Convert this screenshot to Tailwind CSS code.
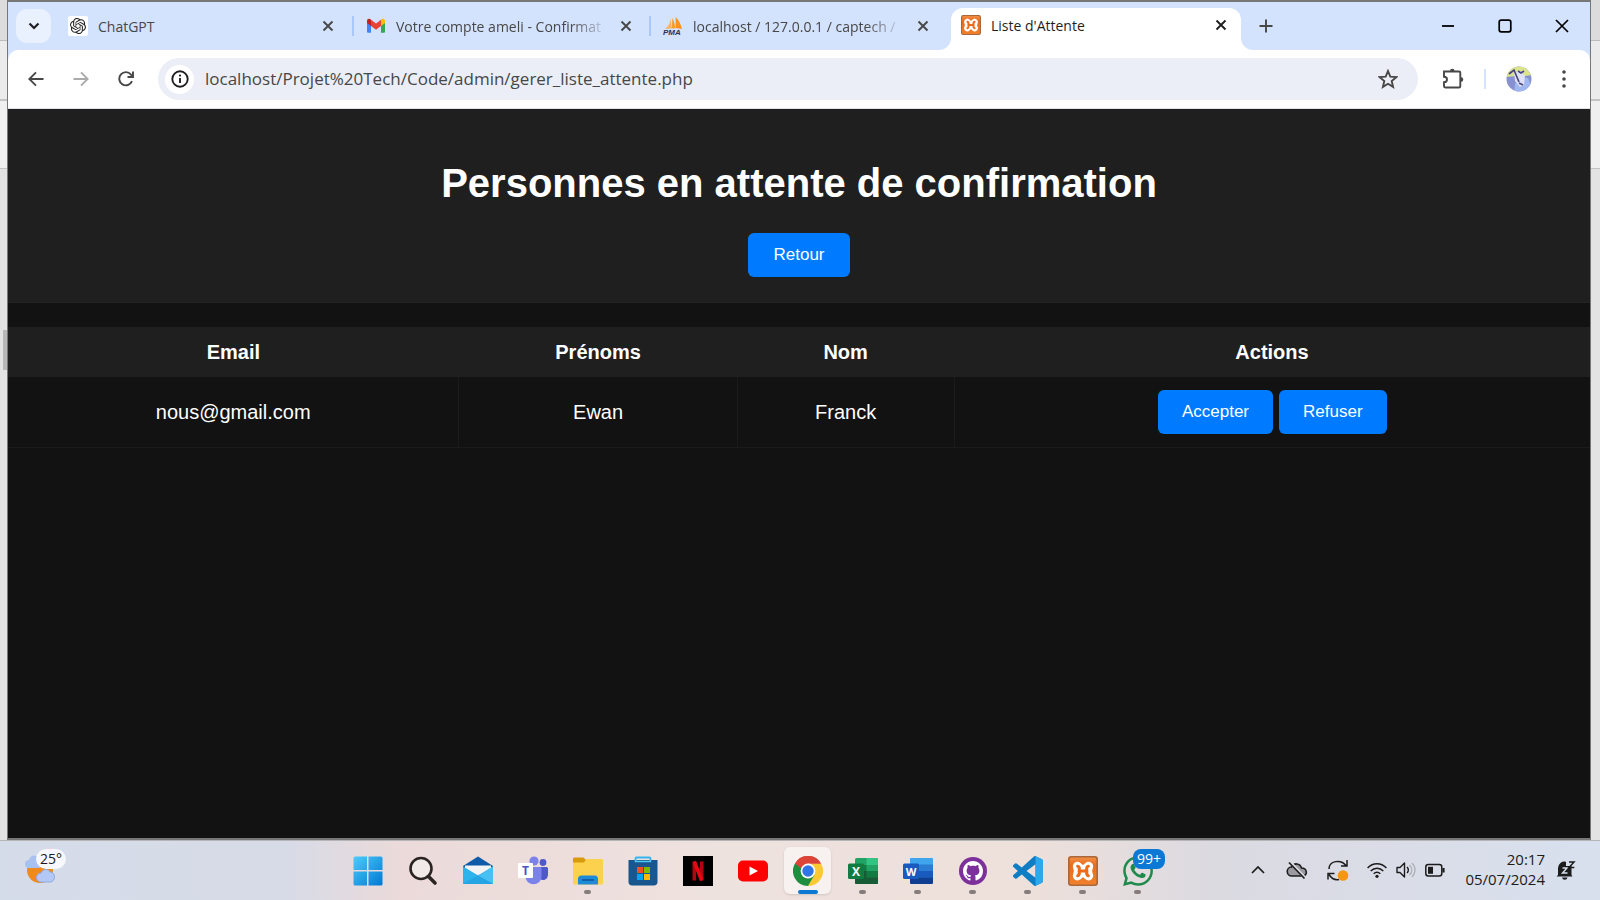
<!DOCTYPE html>
<html lang="fr">
<head>
<meta charset="utf-8">
<title>Liste d'Attente</title>
<script src="https://cdn.jsdelivr.net/npm/@tailwindcss/browser@4"></script>
</head>
<body class="flex min-h-screen flex-col bg-[#e3e3e3] font-['Open_Sans','Noto_Sans',sans-serif] text-[#474747]">

<!-- shared icon shapes -->
<svg class="absolute h-0 w-0" aria-hidden="true">
  <defs>
    <linearGradient id="orange" x2="0" y2="1"><stop stop-color="#f09048"/><stop offset=".3" stop-color="#ea6c1c"/><stop offset="1" stop-color="#f0812c"/></linearGradient>
    <linearGradient id="sky" x2="1" y2="1"><stop stop-color="#4fcbfb"/><stop offset="1" stop-color="#0078d4"/></linearGradient>
  </defs>
  <symbol id="xampp" viewBox="0 0 30 30">
    <rect x=".8" y=".8" width="28.4" height="28.4" rx="2.5" fill="url(#orange)" stroke="#a9673a" stroke-width="1.6"/>
    <path d="M9.500 10.500L20.500 19.700M20.500 10.500L9.500 19.700M9.500 10.500c1.500 3 1.500 6 0 9.200M20.500 10.500c-1.500 3-1.500 6 0 9.200" fill="none" stroke="#fff" stroke-width="9.400" stroke-linecap="round" stroke-linejoin="round"/>
    <path d="M9.600 10.200c2.400.8 1.600 4.800 1.600 4.800s.8 4-1.600 4.800M20.400 10.200c-2.400.8-1.600 4.800-1.600 4.800s-.8 4 1.600 4.800M11 15h8" fill="none" stroke="#ea6c1c" stroke-width="3" stroke-linecap="round"/>
  </symbol>
  <symbol id="close" viewBox="0 0 12 12"><path d="M1.500 1.500l9 9M10.500 1.500l-9 9" stroke="currentColor" stroke-width="1.900"/></symbol>
  <symbol id="pma" viewBox="0 0 20 20">
    <path d="M8 1.500C7.600 6 6 10 2 13l6-.6z" fill="#f8b463"/><path d="M9 2c.6 4-.2 8-.8 10.600l4-.4C12 8.500 11 5 9 2z" fill="#f89c2c"/><path d="M12.600 1c.2 4 .2 8-.1 11l6.500 1C18 8.500 16 4 12.600 1z" fill="#f7941d"/>
    <text x="0" y="19" font-family="Liberation Sans, sans-serif" font-weight="700" font-style="italic" font-size="8" fill="#2d3156">PMA</text>
  </symbol>
</svg>

<div class="flex flex-1">
  <!-- window behind, left edge -->
  <div class="flex w-[7px] flex-col" aria-hidden="true">
    <div class="h-[41px] border-b border-[#bdbdbd] bg-[#dcdcdc]"></div>
    <div class="h-[60px] border-b-2 border-[#c4c4c4] bg-[#ebebeb]"></div>
    <div class="h-[68px] border-b border-[#c4c4c4] bg-[#f0f0f0]"></div>
    <div class="h-[161px]"></div>
    <div class="ml-[3px] h-10 bg-[#b8b8b8]"></div>
  </div>

  <!-- browser window -->
  <div class="flex min-w-0 flex-1 flex-col border border-y-2 border-[#777] bg-[#111]">
    <div class="flex h-12 items-center bg-[#d3e2fd] pl-2">
      <button aria-label="Rechercher dans les onglets" class="mr-[3px] grid h-[34px] w-[35px] place-items-center rounded-[11px] bg-[#e9f0fe] text-[#1f1f1f]">
        <svg class="h-3 w-3" viewBox="0 0 12 12"><path d="M1.500 3.500L6 8l4.500-4.500" fill="none" stroke="currentColor" stroke-width="2.200"/></svg>
      </button>
      <div role="tablist" class="flex h-full">
        <div class="flex w-[298px] items-center pr-[18px] pl-[14px]">
          <button role="tab" class="flex min-w-0 flex-1 items-center gap-[10px] text-left text-[14px]">
            <svg class="h-5 w-5 rounded-xs bg-white p-[2px]" viewBox="0 0 24 24"><path fill="#222" d="M22.2819 9.8211a5.9847 5.9847 0 0 0-.5157-4.9108 6.0462 6.0462 0 0 0-6.5098-2.9A6.0651 6.0651 0 0 0 4.9807 4.1818a5.9847 5.9847 0 0 0-3.9977 2.9 6.0462 6.0462 0 0 0 .7427 7.0966 5.98 5.98 0 0 0 .511 4.9107 6.051 6.051 0 0 0 6.5146 2.9001A5.9847 5.9847 0 0 0 13.2599 24a6.0557 6.0557 0 0 0 5.7718-4.2058 5.9894 5.9894 0 0 0 3.9977-2.9001 6.0557 6.0557 0 0 0-.7475-7.0729zm-9.022 12.6081a4.4755 4.4755 0 0 1-2.8764-1.0408l.1419-.0804 4.7783-2.7582a.7948.7948 0 0 0 .3927-.6813v-6.7369l2.02 1.1686a.071.071 0 0 1 .038.052v5.5826a4.504 4.504 0 0 1-4.4945 4.4944zm-9.6607-4.1254a4.4708 4.4708 0 0 1-.5346-3.0137l.142.0852 4.783 2.7582a.7712.7712 0 0 0 .7806 0l5.8428-3.3685v2.3324a.0804.0804 0 0 1-.0332.0615L9.74 19.9502a4.4992 4.4992 0 0 1-6.1408-1.6464zM2.3408 7.8956a4.485 4.485 0 0 1 2.3655-1.9728V11.6a.7664.7664 0 0 0 .3879.6765l5.8144 3.3543-2.0201 1.1685a.0757.0757 0 0 1-.071 0l-4.8303-2.7865A4.504 4.504 0 0 1 2.3408 7.872zm16.5963 3.8558L13.1038 8.364 15.1192 7.2a.0757.0757 0 0 1 .071 0l4.8303 2.7913a4.4944 4.4944 0 0 1-.6765 8.1042v-5.6772a.79.79 0 0 0-.407-.667zm2.0107-3.0231l-.142-.0852-4.7735-2.7818a.7759.7759 0 0 0-.7854 0L9.409 9.2297V6.8974a.0662.0662 0 0 1 .0284-.0615l4.8303-2.7866a4.4992 4.4992 0 0 1 6.6802 4.66zM8.3065 12.863l-2.02-1.1638a.0804.0804 0 0 1-.038-.0567V6.0742a4.4992 4.4992 0 0 1 7.3757-3.4537l-.142.0805L8.704 5.459a.7948.7948 0 0 0-.3927.6813zm1.0976-2.3654l2.602-1.4998 2.6069 1.4998v2.9994l-2.5974 1.4997-2.6067-1.4997Z"/></svg>
            <span>ChatGPT</span>
          </button>
          <button aria-label="Fermer ChatGPT"><svg class="h-3 w-3"><use href="#close"/></svg></button>
        </div>
        <div class="flex w-[297px] items-center pr-[17px]">
          <span class="mr-3 h-5 w-[2px] bg-[#a9c7fa]"></span>
          <button role="tab" class="flex min-w-0 flex-1 items-center gap-[10px] text-left text-[14px]">
            <svg class="h-5 w-5 shrink-0" viewBox="0 0 20 20"><path d="M1 5v10.500c0 .8.500 1.300 1.300 1.300H5V8z" fill="#4285f4"/><path d="M19 5v10.500c0 .8-.5 1.300-1.300 1.300H15V8z" fill="#34a853"/><path d="M1 7V5c0-2 2-2.700 3.400-1.700L5 3.700V10L1.700 7.600C1.300 7.400 1 7.300 1 7z" fill="#c5221f"/><path d="M15 3.700l.6-.4C17 2.300 19 3 19 5v2L15 10z" fill="#fbbc04"/><path d="M5 3.700l5 3.800 5-3.800V10l-5 3.700L5 10z" fill="#ea4335"/></svg>
            <span class="whitespace-nowrap [mask-image:linear-gradient(to_right,black_85%,rgb(0_0_0/0.2))]">Votre compte ameli - Confirmat</span>
          </button>
          <button aria-label="Fermer Votre compte ameli"><svg class="h-3 w-3"><use href="#close"/></svg></button>
        </div>
        <div class="flex w-[298px] items-center pr-[18px]">
          <span class="mr-3 h-5 w-[2px] bg-[#a9c7fa]"></span>
          <button role="tab" class="flex min-w-0 flex-1 items-center gap-[10px] text-left text-[14px]">
            <svg class="h-5 w-5 shrink-0"><use href="#pma"/></svg>
            <span class="whitespace-nowrap [mask-image:linear-gradient(to_right,black_85%,rgb(0_0_0/0.2))]">localhost / 127.0.0.1 / captech /</span>
          </button>
          <button aria-label="Fermer phpMyAdmin"><svg class="h-3 w-3"><use href="#close"/></svg></button>
        </div>
        <div class="relative mx-1 flex h-[42px] w-[290px] items-center self-end rounded-t-[12px] bg-white pr-[14px] pl-[10px] text-[#1f1f1f]">
          <svg class="absolute bottom-0 -left-3 h-3 w-3 text-white" viewBox="0 0 12 12"><path d="M12 0v12H0A12 12 0 0 0 12 0z" fill="currentColor"/></svg>
          <svg class="absolute -right-3 bottom-0 h-3 w-3 text-white" viewBox="0 0 12 12"><path d="M0 0v12h12A12 12 0 0 1 0 0z" fill="currentColor"/></svg>
          <button role="tab" aria-selected="true" class="flex flex-1 items-center gap-[10px] pb-[8px] text-left text-[14px]">
            <svg class="h-5 w-5"><use href="#xampp"/></svg>
            <span>Liste d'Attente</span>
          </button>
          <button aria-label="Fermer Liste d'Attente" class="pb-[8px]"><svg class="h-3 w-3"><use href="#close"/></svg></button>
        </div>
      </div>
      <button aria-label="Nouvel onglet" class="ml-[14px]"><svg class="h-[14px] w-[14px]" viewBox="0 0 14 14"><path d="M7 .5v13M.5 7h13" stroke="currentColor" stroke-width="1.900"/></svg></button>
      <div class="ml-auto flex self-stretch text-black">
        <button aria-label="Réduire" class="grid w-[57px] place-items-center"><svg class="h-3 w-3" viewBox="0 0 12 12"><path d="M0 6h12" stroke="currentColor" stroke-width="1.800"/></svg></button>
        <button aria-label="Agrandir" class="grid w-[57px] place-items-center"><svg class="h-[14px] w-[14px]" viewBox="0 0 14 14"><rect x="1.200" y="1.200" width="11.600" height="11.600" rx="2" fill="none" stroke="currentColor" stroke-width="1.700"/></svg></button>
        <button aria-label="Fermer" class="grid w-[57px] place-items-center"><svg class="h-[14px] w-[14px]" viewBox="0 0 14 14"><path d="M1 1l12 12M13 1L1 13" stroke="currentColor" stroke-width="1.700"/></svg></button>
      </div>
    </div>

    <div class="bg-[#d3e2fd]">
      <div class="flex h-[59px] items-center rounded-t-[10px] border-b border-[#dfe3e8] bg-white pr-[15px] pl-5">
        <button aria-label="Retour arrière" class="mr-[29px]"><svg class="h-4 w-4" viewBox="0 0 16 16"><path d="M15.500 8H1.500M8 1.300L1.300 8 8 14.700" fill="none" stroke="currentColor" stroke-width="1.900"/></svg></button>
        <button aria-label="Avancer" class="mr-[29px] text-[#ababab]"><svg class="h-4 w-4" viewBox="0 0 16 16"><path d="M.5 8h14M8 1.300L14.700 8 8 14.700" fill="none" stroke="currentColor" stroke-width="1.900"/></svg></button>
        <button aria-label="Actualiser" class="mr-6"><svg class="h-4 w-4" viewBox="0 0 16 16"><path d="M14 10.200A6.600 6.600 0 1 1 13 3.600L15 5.700M15 .5v5.500H9.500" fill="none" stroke="currentColor" stroke-width="1.900"/></svg></button>
        <div class="flex h-[42px] flex-1 items-center rounded-full bg-[#ebeef7] pr-5 pl-[7px]">
          <button aria-label="Informations sur le site" class="mr-[11px] grid h-[29px] w-[29px] place-items-center rounded-full bg-white text-[#1f1f1f]">
            <svg class="h-[18px] w-[18px]" viewBox="0 0 18 18"><circle cx="9" cy="9" r="7.700" fill="none" stroke="currentColor" stroke-width="1.900"/><path d="M9 8v5" stroke="currentColor" stroke-width="1.900"/><circle cx="9" cy="5.600" r="1.100" fill="currentColor"/></svg>
          </button>
          <input type="text" aria-label="Adresse" value="localhost/Projet%20Tech/Code/admin/gerer_liste_attente.php" class="min-w-0 flex-1 bg-transparent text-[17px] outline-none">
          <button aria-label="Ajouter aux favoris"><svg class="h-5 w-5" viewBox="0 0 20 20"><path d="M10 2l2.300 5.600 6 .5-4.600 3.900 1.400 5.900L10 14.800l-5.100 3.100L6.300 12 1.700 8.100l6-.5z" fill="none" stroke="currentColor" stroke-width="1.900"/></svg></button>
        </div>
        <button aria-label="Extensions" class="ml-6"><svg class="h-[22px] w-[22px]" viewBox="0 0 22 22"><path d="M2 3.500h15c.8 0 1.300.500 1.300 1.300v13.400c0 .8-.5 1.300-1.300 1.300H3.200c-.7 0-1.200-.4-1.200-1.200v-4.100c2 0 3-1.300 3-2.700S4 8.800 2 8.800z" fill="none" stroke="currentColor" stroke-width="1.900"/><path d="M8 3a2.300 2.300 0 0 1 4.600 0zM19 9.200a2.300 2.300 0 0 1 0 4.600z" fill="currentColor"/></svg></button>
        <span class="mx-5 h-5 w-[2px] bg-[#d3e2fd]"></span>
        <button aria-label="Profil"><svg class="h-[26px] w-[26px]" viewBox="0 0 26 26"><clipPath id="round"><circle cx="13" cy="13" r="12.500"/></clipPath><g clip-path="url(#round)"><path fill="#8791cf" d="M0 0h26v26H0z"/><path fill="#dbe48b" d="M0 0h26v9l-7 1-9 0-10 1z"/><path fill="#9fb6ee" d="M9 18l5-7 8 1 3 7-8 7H8z"/><path fill="#dfe1f7" d="M8 6l7-1 4 5-1 9-4 2-5-6z"/><path d="M3 8l5-4 5 12M12 5l3 2 3-2M13 17l4 2" fill="none" stroke="#4a4384" stroke-width="1.700"/></g></svg></button>
        <button aria-label="Menu" class="ml-[21px] w-[22px]"><svg class="mx-auto h-[18px] w-1" viewBox="0 0 4 18"><circle cx="2" cy="2" r="1.800" fill="currentColor"/><circle cx="2" cy="9" r="1.800" fill="currentColor"/><circle cx="2" cy="16" r="1.800" fill="currentColor"/></svg></button>
      </div>
    </div>

    <!-- page -->
    <main class="flex-1 bg-[#121212] text-center font-['Liberation_Sans',Arial,sans-serif] text-xl leading-6 text-white">
      <header class="mb-6 border-b border-[#242424] bg-[#1f1f1f] pt-[50px] pb-[25px]">
        <h1 class="mb-[25px] text-[40px] leading-[49px] font-bold">Personnes en attente de confirmation</h1>
        <button class="h-11 rounded-md bg-[#007bff] px-[25px] text-[17px]">Retour</button>
      </header>
      <table class="w-full table-fixed border-collapse">
        <colgroup><col class="w-[28.500%]"><col class="w-[17.600%]"><col class="w-[13.700%]"><col></colgroup>
        <thead>
          <tr class="h-[50px] bg-[#1f1f1f]"><th scope="col">Email</th><th scope="col">Prénoms</th><th scope="col">Nom</th><th scope="col">Actions</th></tr>
        </thead>
        <tbody>
          <tr class="h-[70px] border-b border-[#1b1b1b]">
            <td class="border-r border-[#1b1b1b]">nous@gmail.com</td>
            <td class="border-r border-[#1b1b1b]">Ewan</td>
            <td class="border-r border-[#1b1b1b]">Franck</td>
            <td><div class="flex justify-center gap-[6px]">
              <button class="h-11 rounded-md bg-[#007bff] px-6 text-[17px]">Accepter</button>
              <button class="h-11 rounded-md bg-[#007bff] px-6 text-[17px]">Refuser</button>
            </div></td>
          </tr>
        </tbody>
      </table>
    </main>
  </div>

  <!-- window behind, right edge -->
  <div class="flex w-[9px] flex-col" aria-hidden="true">
    <div class="h-[41px] border-b border-[#bdbdbd] bg-[#dcdcdc]"></div>
    <div class="h-[60px] border-b-2 border-[#c4c4c4] bg-[#ebebeb]"></div>
    <div class="h-[68px] border-b border-[#c4c4c4] bg-[#f0f0f0]"></div>
  </div>
</div>

<!-- taskbar -->
<footer class="flex h-[60px] items-center border-t border-[#b5b5b8] bg-[linear-gradient(90deg,#d5dce9_0%,#d7dbe7_18%,#ebdad9_25%,#eee2df_45%,#eee0da_64%,#dbdae1_76%,#d8e0ee_100%)] text-[#1c1c1c]">
  <button aria-label="Météo" class="flex w-[340px] shrink pb-[2px] pl-6">
    <span class="relative block h-9 w-10">
      <svg class="h-9 w-10" viewBox="0 0 40 36"><circle cx="16" cy="18" r="13" fill="#f08a1c"/><path d="M5 16a4 4 0 0 1 0-8c1-5 7-6 9-2 5 0 6 8 1 10z" fill="#a9c1f1"/><path d="M17 30a4.500 4.500 0 0 1 0-9c2-5 8-4 9-1 6 0 6 10 0 10z" fill="#b3c8f4" stroke="#8fa9e0"/></svg>
      <span class="absolute -top-[3px] left-3 rounded-full bg-[#f6f8fb] px-1 text-sm leading-5">25°</span>
    </span>
  </button>
  <nav aria-label="Applications" class="flex h-full">
    <button aria-label="Démarrer" class="grid w-[55px] place-items-center"><svg class="h-[30px] w-[30px]" viewBox="0 0 30 30"><path d="M2 .5h12V14H.5V2A1.500 1.500 0 0 1 2 .5zM15.500.5H28A1.500 1.500 0 0 1 29.500 2v12h-14zM.5 15.500H14v14H2A1.500 1.500 0 0 1 .5 28zM15.500 15.500h14V28a1.500 1.500 0 0 1-1.500 1.500H15.500z" fill="url(#sky)"/></svg></button>
    <button aria-label="Rechercher" class="grid w-[55px] place-items-center"><svg class="h-[30px] w-[30px]" viewBox="0 0 30 30"><circle cx="13" cy="12.500" r="10.500" fill="#f1e9e8" stroke="#2a2523" stroke-width="2.600"/><path d="M20.500 20.500l6.500 6.500" stroke="#2a2523" stroke-width="3.600" stroke-linecap="round"/></svg></button>
    <button aria-label="Courrier" class="grid w-[55px] place-items-center"><svg class="h-8 w-8" viewBox="0 0 32 32"><path d="M1 11L16 1.500l15 9.500v4H1z" fill="#0f5aa8"/><path d="M3 10.500h26v9H3z" fill="#f3f2f5"/><path d="M1 11.500l15 9 15-9V28c0 .6-.4 1-1 1H2c-.6 0-1-.4-1-1z" fill="#25a9e8"/><path d="M1 28V11.500L27.500 29H2c-.6 0-1-.4-1-1z" fill="#2db4ec"/><path d="M16 21l15-9.500V28c0 .5-.2.800-.6 1z" fill="#47c0f3"/><path d="M16 20.500l15 8c-.2.300-.6.500-1 .5H2c-.4 0-.8-.2-1-.5z" fill="#1f9be0" opacity=".6"/></svg></button>
    <button aria-label="Teams" class="grid w-[55px] place-items-center"><svg class="h-8 w-8" viewBox="0 0 32 32"><circle cx="26" cy="7.500" r="3.400" fill="#5059c9"/><circle cx="17" cy="6" r="4.600" fill="#7b83eb"/><path d="M21 12h8.500c.9 0 1.500.6 1.500 1.500V20a5 5 0 0 1-8 4z" fill="#5059c9"/><path d="M9.500 12H23c.9 0 1.500.6 1.500 1.500V21c0 11-16 11-16 0v-7.500c0-.8.3-1.500 1-1.500z" fill="#7b83eb"/><rect x="1" y="8" width="15" height="15" rx="1" fill="#fff"/><text x="8.500" y="20" text-anchor="middle" font-family="Open Sans, sans-serif" font-weight="700" font-size="12" fill="#4b53bc">T</text></svg></button>
    <button aria-label="Explorateur de fichiers" class="relative grid w-[55px] place-items-center"><svg class="h-8 w-8" viewBox="0 0 32 32"><path d="M1 4c0-1 .6-1.500 1.500-1.500h9l2.500 2.500h15c1 0 1.500.6 1.500 1.500V12H1z" fill="#d79a0a"/><path d="M1 7.500h11L14.500 4h15c.8 0 1.500.6 1.500 1.500V28c0 .8-.6 1.500-1.500 1.500h-27C1.600 29.500 1 28.800 1 28z" fill="#fbd14e"/><path d="M6 29.500V24c0-2 1.300-3.500 3.300-3.500h13.500c2 0 3.200 1.500 3.200 3.500v5.500z" fill="#1f8ad8"/><path d="M10 25h12" stroke="#0b5394" stroke-width="1.500"/></svg><span class="absolute bottom-[6px] h-1 w-[7px] rounded-full bg-[#857c7b]"></span></button>
    <button aria-label="Microsoft Store" class="grid w-[55px] place-items-center"><svg class="h-8 w-8" viewBox="0 0 32 32"><path d="M8.500 7V3.500c0-.6.400-1 1-1h13c.6 0 1 .4 1 1V7" fill="none" stroke="#35b4f0" stroke-width="1.800"/><path d="M1.500 5h29v22c0 2-1.500 3.500-3.500 3.500H5c-2 0-3.500-1.500-3.500-3.500z" fill="#17568f"/><path d="M8.500 5v1.500h15V5" fill="none" stroke="#4fc8f5" stroke-width="1.500"/><path d="M10 12h6v6h-6z" fill="#f25022"/><path d="M17 12h6v6h-6z" fill="#7fba00"/><path d="M10 19h6v6h-6z" fill="#00a4ef"/><path d="M17 19h6v6h-6z" fill="#ffb900"/></svg></button>
    <button aria-label="Netflix" class="grid w-[55px] place-items-center"><svg class="h-[30px] w-[30px]" viewBox="0 0 30 30"><path d="M0 0h30v30H0z" fill="#000"/><rect x="9.500" y="5.500" width="3.600" height="19" fill="#b1060f"/><rect x="16.900" y="5.500" width="3.600" height="19" fill="#b1060f"/><line x1="11.300" y1="5.500" x2="18.700" y2="24.500" stroke="#e50914" stroke-width="3.600"/></svg></button>
    <button aria-label="YouTube" class="grid w-[55px] place-items-center"><svg class="h-[30px] w-[30px]" viewBox="0 0 30 30"><rect y="4.500" width="30" height="21" rx="5" fill="#f00"/><path d="M11.500 10.500l8.500 4.500-8.500 4.500z" fill="#fff"/></svg></button>
    <button aria-label="Google Chrome" class="relative my-[6px] mx-1 grid w-[47px] place-items-center rounded-md bg-[#f7f1ef] shadow-sm"><svg class="h-[30px] w-[30px]" viewBox="0 0 30 30"><path d="M15 15V7.500h13A15 15 0 0 1 15 30z" fill="#fcc934"/><path d="M15 15l6.500 3.750L15 30A15 15 0 0 1 2 7.500z" fill="#1e8e3e"/><path d="M2 7.500A15 15 0 0 1 28 7.500H15v7.500z" fill="#db4437"/><path d="M2 7.500l6.500 11.200L15 15z" fill="#1e8e3e"/><path d="M2 7.500A15 15 0 0 1 28 7.500H15L8 12z" fill="#db4437"/><circle cx="15" cy="15" r="7.400" fill="#fff"/><circle cx="15" cy="15" r="5.700" fill="#2f75e8"/></svg><span class="absolute bottom-0 h-1 w-5 rounded-full bg-[#0a78d4]"></span></button>
    <button aria-label="Excel" class="relative grid w-[55px] place-items-center"><svg class="h-8 w-8" viewBox="0 0 32 32"><rect x="8" y="3" width="23" height="26" rx="1.500" fill="#21a366"/><path d="M19.500 3H30c.6 0 1 .5 1 1v6H19.500z" fill="#33c481"/><path d="M8 16h11.500v-6H8z" fill="#107c41"/><path d="M8 16h23v12c0 .6-.5 1-1 1H9.500C8.600 29 8 28.500 8 28z" fill="#185c37"/><path d="M19.500 16H31v6.500H19.500z" fill="#107c41"/><rect x="1" y="8.500" width="16" height="15.500" rx="1.500" fill="#107c41"/><text x="9" y="20.500" text-anchor="middle" font-family="Open Sans, sans-serif" font-weight="700" font-size="12" fill="#fff">X</text></svg><span class="absolute bottom-[6px] h-1 w-[7px] rounded-full bg-[#857c7b]"></span></button>
    <button aria-label="Word" class="relative grid w-[55px] place-items-center"><svg class="h-8 w-8" viewBox="0 0 32 32"><rect x="8" y="3" width="23" height="26" rx="1.500" fill="#2b7cd3"/><path d="M8 9.500V4.500C8 3.600 8.600 3 9.500 3h20c.9 0 1.500.6 1.500 1.500v5z" fill="#41a5ee"/><path d="M8 16h23v6.500H8z" fill="#185abd"/><path d="M8 22.500h23v5c0 .9-.6 1.500-1.500 1.500h-20c-.9 0-1.500-.6-1.500-1.500z" fill="#103f91"/><rect x="1" y="8.500" width="16" height="15.500" rx="1.500" fill="#185abd"/><text x="9" y="20.500" text-anchor="middle" font-family="Open Sans, sans-serif" font-weight="700" font-size="11" fill="#fff">W</text></svg><span class="absolute bottom-[6px] h-1 w-[7px] rounded-full bg-[#857c7b]"></span></button>
    <button aria-label="GitHub Desktop" class="relative grid w-[55px] place-items-center"><svg class="h-7 w-7" viewBox="0 0 28 28"><circle cx="14" cy="14" r="14" fill="#7d2f9c"/><path transform="translate(4 4) scale(1.250)" fill="#fff" d="M8 0C3.580 0 0 3.580 0 8c0 3.540 2.290 6.530 5.470 7.590.4.070.55-.17.55-.38 0-.19-.01-.82-.01-1.490-2.010.37-2.530-.49-2.690-.94-.09-.23-.48-.94-.82-1.130-.28-.15-.68-.52-.01-.53.63-.01 1.080.58 1.230.82.72 1.210 1.870.87 2.330.66.07-.52.28-.87.51-1.070-1.780-.2-3.640-.89-3.640-3.950 0-.87.31-1.590.82-2.150-.08-.2-.36-1.020.08-2.120 0 0 .67-.21 2.200.82.64-.18 1.320-.27 2-.27s1.360.09 2 .27c1.530-1.040 2.200-.82 2.200-.82.44 1.100.16 1.920.08 2.120.51.56.82 1.270.82 2.150 0 3.070-1.870 3.750-3.650 3.950.29.25.54.73.54 1.480 0 1.070-.01 1.930-.01 2.200 0 .21.15.46.55.38A8.010 8.010 0 0 0 16 8c0-4.420-3.580-8-8-8"/></svg><span class="absolute bottom-[6px] h-1 w-[7px] rounded-full bg-[#857c7b]"></span></button>
    <button aria-label="Visual Studio Code" class="relative grid w-[55px] place-items-center"><svg class="h-[30px] w-[30px]" viewBox="0 0 24 24"><path fill="#0f7dc4" d="M23.15 2.587L18.21.21a1.494 1.494 0 0 0-1.705.29l-9.46 8.63-4.12-3.128a.999.999 0 0 0-1.276.057L.327 7.261A1 1 0 0 0 .326 8.74L3.899 12 .326 15.26a1 1 0 0 0 .001 1.479L1.65 17.94a.999.999 0 0 0 1.276.057l4.12-3.128 9.46 8.63a1.492 1.492 0 0 0 1.704.29l4.942-2.377A1.5 1.5 0 0 0 24 20.06V3.939a1.5 1.5 0 0 0-.85-1.352zm-5.146 14.861L10.826 12l7.178-5.448v10.896z"/><path fill="#2ea8ec" d="M18 .2l5.150 2.387a1.500 1.500 0 0 1 .85 1.352V20.060a1.500 1.500 0 0 1-.85 1.352L18 23.800z"/></svg><span class="absolute bottom-[6px] h-1 w-[7px] rounded-full bg-[#857c7b]"></span></button>
    <button aria-label="XAMPP" class="relative grid w-[55px] place-items-center"><svg class="h-[30px] w-[30px]"><use href="#xampp"/></svg><span class="absolute bottom-[6px] h-1 w-[7px] rounded-full bg-[#857c7b]"></span></button>
    <button aria-label="WhatsApp" class="relative grid w-[55px] place-items-center"><svg class="h-[30px] w-[30px]" viewBox="0 0 24 24"><path fill="#1f8a4c" d="M17.472 14.382c-.297-.149-1.758-.867-2.03-.967-.273-.099-.471-.148-.67.15-.197.297-.767.966-.94 1.164-.173.199-.347.223-.644.075-.297-.15-1.255-.463-2.39-1.475-.883-.788-1.48-1.761-1.653-2.059-.173-.297-.018-.458.13-.606.134-.133.298-.347.446-.52.149-.174.198-.298.298-.497.099-.198.05-.371-.025-.52-.075-.149-.669-1.612-.916-2.207-.242-.579-.487-.5-.669-.51-.173-.008-.371-.01-.57-.01-.198 0-.52.074-.792.372-.272.297-1.04 1.016-1.04 2.479 0 1.462 1.065 2.875 1.213 3.074.149.198 2.096 3.2 5.077 4.487.709.306 1.262.489 1.694.625.712.227 1.36.195 1.871.118.571-.085 1.758-.719 2.006-1.413.248-.694.248-1.289.173-1.413-.074-.124-.272-.198-.57-.347m-5.421 7.403h-.004a9.87 9.87 0 01-5.031-1.378l-.361-.214-3.741.982.998-3.648-.235-.374a9.86 9.86 0 01-1.51-5.26c.001-5.45 4.436-9.884 9.888-9.884 2.64 0 5.122 1.03 6.988 2.898a9.825 9.825 0 012.893 6.994c-.003 5.45-4.437 9.884-9.885 9.884m8.413-18.297A11.815 11.815 0 0012.05 0C5.495 0 .16 5.335.157 11.892c0 2.096.547 4.142 1.588 5.945L.057 24l6.305-1.654a11.882 11.882 0 005.683 1.448h.005c6.554 0 11.89-5.335 11.893-11.893a11.821 11.821 0 00-3.48-8.413z"/></svg><span class="absolute top-2 left-[23px] rounded-lg bg-[#0a78d4] px-1 text-sm leading-5 text-white">99+</span><span class="absolute bottom-[6px] h-1 w-[7px] rounded-full bg-[#857c7b]"></span></button>
  </nav>
  <div class="ml-auto flex items-center pr-6 pb-[2px]">
    <button aria-label="Icônes cachées" class="mr-[21px]"><svg class="h-[14px] w-[14px]" viewBox="0 0 14 14"><path d="M1 10l6-6 6 6" fill="none" stroke="currentColor" stroke-width="1.700"/></svg></button>
    <button aria-label="OneDrive" class="mr-[19px]"><svg class="h-[22px] w-[22px]" viewBox="0 0 22 22"><path d="M6 17a4.500 4.500 0 0 1-.5-9C8 3.500 14 4 15.500 9c6 0 6.500 8 1 8z" fill="#9a9aa0" stroke="currentColor" stroke-width="1.600"/><path d="M4 3l16 17" stroke="#dcdce2" stroke-width="3"/><path d="M3 3.500l15.500 16" stroke="currentColor" stroke-width="1.700"/></svg></button>
    <button aria-label="Windows Update" class="mr-[18px]"><svg class="h-[22px] w-[22px]" viewBox="0 0 22 22"><path d="M2 10C2 1.500 14 0 19 6.500M20 1v6h-6M12 20.500c-4 .8-7.500-1-10-5M1 20.500V14.500h6.500" fill="none" stroke="currentColor" stroke-width="1.500"/><circle cx="16" cy="16.500" r="5.300" fill="#f7960f"/></svg></button>
    <button aria-label="Réseau, son et batterie" class="mr-5 flex items-center gap-[9px]">
      <svg class="h-5 w-5" viewBox="0 0 20 20"><path d="M.6 8c5.400-5.600 13.400-5.600 18.800 0M3.700 11c3.600-3.700 9-3.700 12.600 0M6.700 13.800c2-2 4.600-2 6.600 0" fill="none" stroke="currentColor" stroke-width="1.500"/><circle cx="10" cy="16.300" r="1.600" fill="currentColor"/></svg>
      <svg class="h-5 w-5" viewBox="0 0 20 20"><path d="M1 7.500h3L8.500 3v14L4 12.500H1z" fill="none" stroke="currentColor" stroke-width="1.400" stroke-linejoin="round"/><path d="M11 7c1.800 1.700 1.800 4.300 0 6" fill="none" stroke="currentColor" stroke-width="1.400"/><path d="M13.500 5c3 3 3 7 0 10M16 3c4 4 4 10 0 14" fill="none" stroke="#aeb0b8" stroke-width="1.400"/></svg>
      <svg class="h-5 w-5" viewBox="0 0 20 20"><rect x=".8" y="4.500" width="16" height="11.500" rx="2.500" fill="none" stroke="currentColor" stroke-width="1.500"/><rect x="3" y="6.800" width="5" height="7" fill="currentColor"/><path d="M18.500 8v4.500" stroke="currentColor" stroke-width="2.200"/></svg>
    </button>
    <button class="mr-[11px] pb-[2px] text-right text-[15px] leading-5"><time class="block">20:17</time><time class="block">05/07/2024</time></button>
    <button aria-label="Ne pas déranger"><svg class="h-5 w-5" viewBox="0 0 20 20"><path d="M2 15V8a6.500 6.500 0 0 1 8-6.300V6h5.500v9l1 1.500h-16zM6 17.500h5.500a2.800 2.800 0 0 1-5.500 0z" fill="currentColor"/><path d="M6.500 8h4.500l-4.500 5h5" fill="none" stroke="#d8dfec" stroke-width="1.400"/><path d="M13 2h5l-5 5.500h5.300" fill="none" stroke="currentColor" stroke-width="1.500"/></svg></button>
  </div>
</footer>
</body>
</html>
